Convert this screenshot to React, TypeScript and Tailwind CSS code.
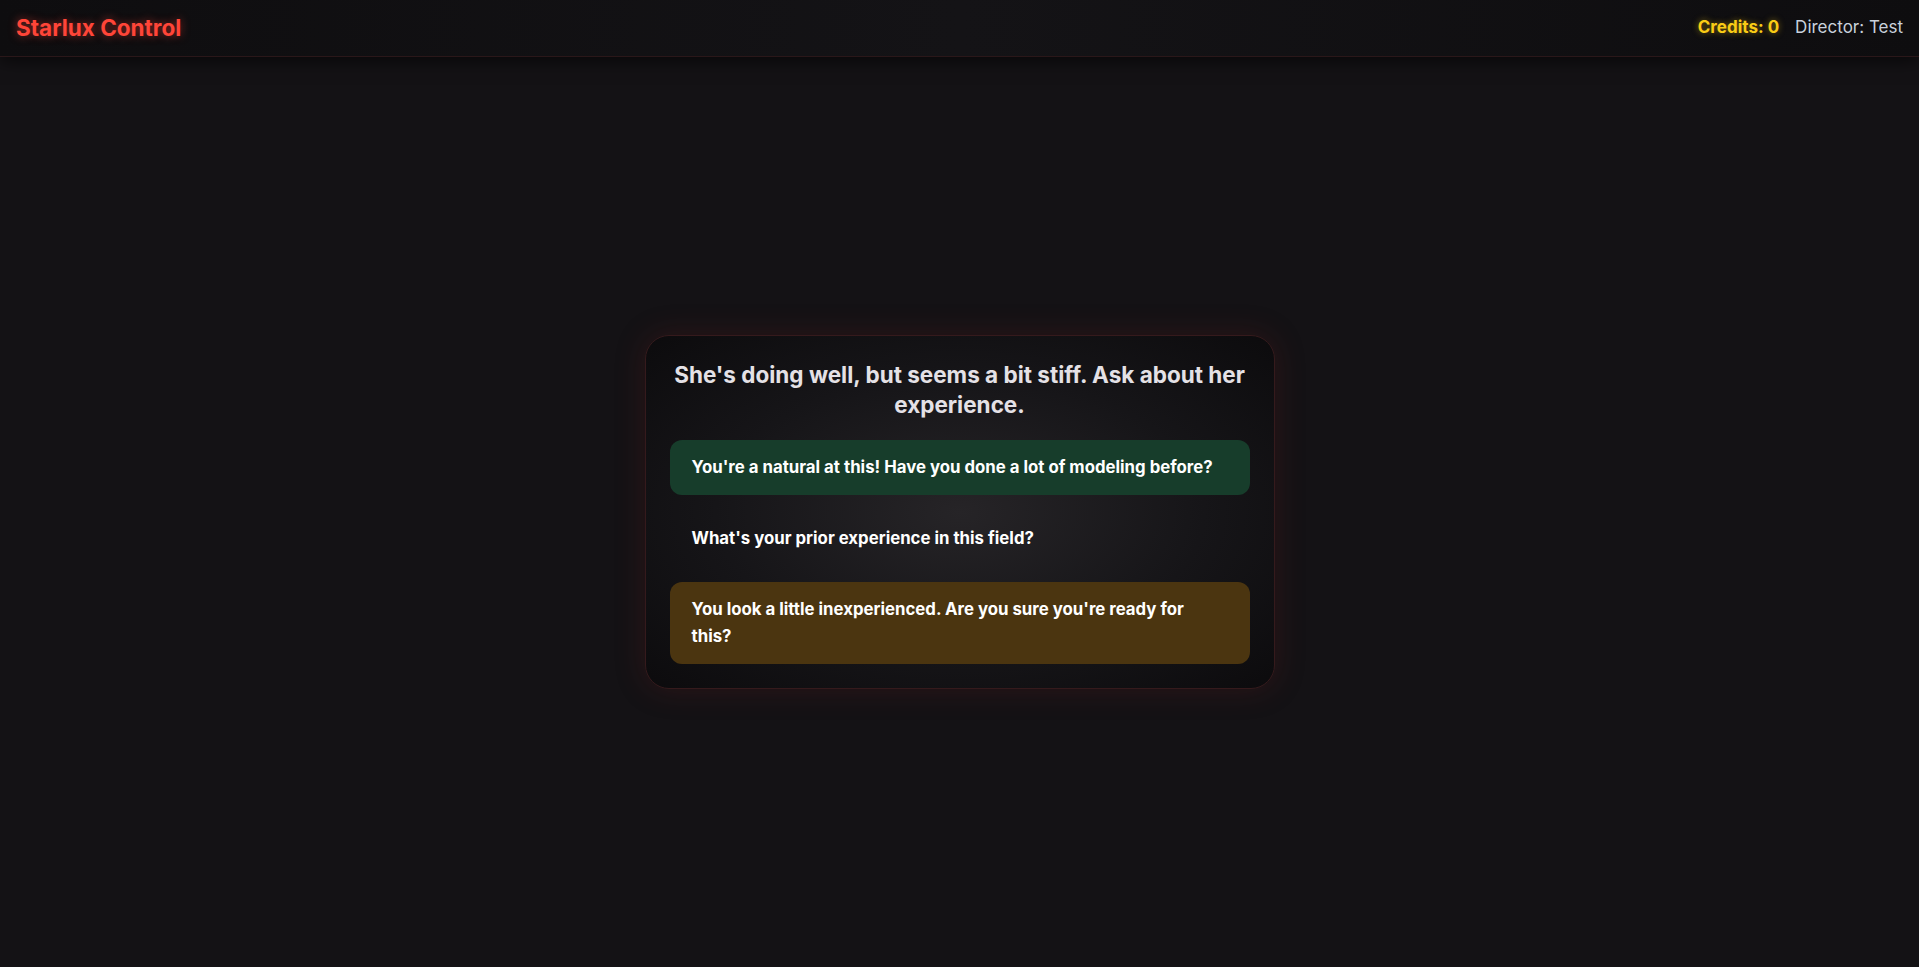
export default function App() {
  const options = [
    {
      text: "You're a natural at this! Have you done a lot of modeling before?",
      cls: "bg-[#173d2b]",
    },
    {
      text: "What's your prior experience in this field?",
      cls: "bg-transparent",
    },
    {
      text: "You look a little inexperienced. Are you sure you're ready for this?",
      cls: "bg-[#4b3510]",
    },
  ];

  return (
    <div className="min-h-screen flex flex-col bg-[#141215] text-gray-200 font-['Inter',sans-serif]">
      {/* Header */}
      <header className="h-[57px] shrink-0 flex items-center justify-between px-4 bg-gradient-to-r from-[#0e0d0f] via-[#141316] to-[#0e0d0f] border-b border-[#2a1719] shadow-[0_4px_16px_rgba(0,0,0,0.6)]">
        <h1 className="text-[22.5px] font-bold text-[#ff4538] [text-shadow:0_0_8px_rgba(255,69,56,0.55)]">
          Starlux Control
        </h1>
        <div className="flex items-center gap-4 text-[17px]">
          <span className="font-bold text-[#facc15] [text-shadow:0_0_6px_rgba(250,204,21,0.5)]">
            Credits: 0
          </span>
          <span className="text-[#c9d1dc]">Director: Test</span>
        </div>
      </header>

      {/* Main */}
      <main className="flex-1 flex items-center justify-center">
        <div className="w-[630px] rounded-3xl border border-[#351a1c] bg-[radial-gradient(ellipse_at_center,#262427_0%,#161518_55%,#0c0b0d_100%)] p-6 shadow-[0_0_30px_rgba(120,30,30,0.25)]">
          <h2 className="text-[22.5px] leading-[30px] font-bold text-center text-[#e4e1e6] mb-5">
            She's doing well, but seems a bit stiff. Ask about her experience.
          </h2>
          <div className="flex flex-col gap-4">
            {options.map((o) => (
              <button
                key={o.text}
                className={`w-full text-left rounded-xl px-[22px] py-3.5 text-[16.8px] leading-[27px] font-bold text-white ${o.cls}`}
              >
                {o.text}
              </button>
            ))}
          </div>
        </div>
      </main>
    </div>
  );
}
